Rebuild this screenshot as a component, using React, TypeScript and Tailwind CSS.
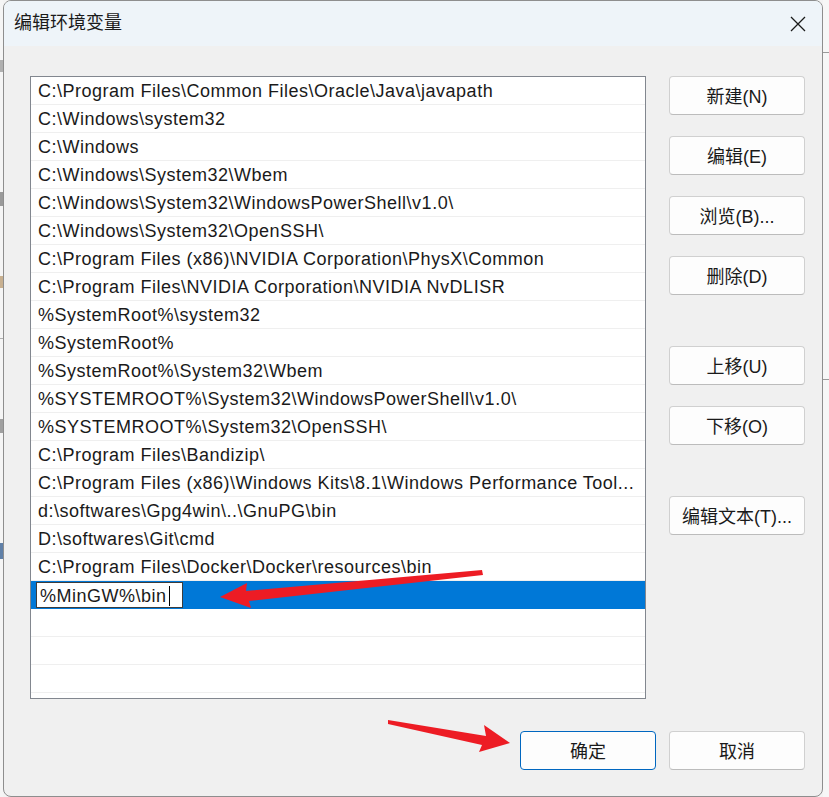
import React from "react";

const paths = [
  "C:\\Program Files\\Common Files\\Oracle\\Java\\javapath",
  "C:\\Windows\\system32",
  "C:\\Windows",
  "C:\\Windows\\System32\\Wbem",
  "C:\\Windows\\System32\\WindowsPowerShell\\v1.0\\",
  "C:\\Windows\\System32\\OpenSSH\\",
  "C:\\Program Files (x86)\\NVIDIA Corporation\\PhysX\\Common",
  "C:\\Program Files\\NVIDIA Corporation\\NVIDIA NvDLISR",
  "%SystemRoot%\\system32",
  "%SystemRoot%",
  "%SystemRoot%\\System32\\Wbem",
  "%SYSTEMROOT%\\System32\\WindowsPowerShell\\v1.0\\",
  "%SYSTEMROOT%\\System32\\OpenSSH\\",
  "C:\\Program Files\\Bandizip\\",
  "C:\\Program Files (x86)\\Windows Kits\\8.1\\Windows Performance Tool...",
  "d:\\softwares\\Gpg4win\\..\\GnuPG\\bin",
  "D:\\softwares\\Git\\cmd",
  "C:\\Program Files\\Docker\\Docker\\resources\\bin",
];

const font = { fontFamily: '"Liberation Sans", "Noto Sans CJK SC", sans-serif' };

function Btn({ label, primary, className = "" }: { label: string; primary?: boolean; className?: string }) {
  return (
    <button
      className={`flex h-[39px] w-[136px] items-center justify-center rounded-[4px] border bg-[#fdfdfd] pt-[3px] text-[18px] text-[#1a1a1a] ${
        primary ? "border-[#0067c0]" : "border-[#d0d0d0] border-b-[#bcbcbc]"
      } ${className}`}
    >
      {label}
    </button>
  );
}

export default function App() {
  return (
    <div className="relative flex h-[797px] w-[829px] overflow-hidden bg-[#f3f3f3]" style={font}>
      {/* window behind, left edge */}
      <div className="flex w-[3px] flex-col bg-[#f5f5f5]">
        <div className="mt-[60px] h-[12px] bg-[#b0b0b0]" />
        <div className="mt-[120px] h-[14px] bg-[#9a9a9a]" />
        <div className="mt-[70px] h-[12px] bg-[#c8b090]" />
        <div className="mt-[50px] h-px bg-[#b0b0b0]" />
        <div className="mt-[80px] h-[14px] bg-[#a0a0a0]" />
        <div className="mt-[110px] h-[16px] bg-[#6080a8]" />
      </div>

      <div className="flex h-[797px] w-[820px] flex-col overflow-hidden rounded-[8px] border border-[#8e8e8e] bg-[#f0f0f0]">
        <div className="flex h-[45px] items-center justify-between bg-[#eef4f9] pl-[10px] pr-[14px]">
          <span className="text-[18px] text-[#1a1a1a]">编辑环境变量</span>
          <svg width="16" height="16" viewBox="0 0 16 16" className="mr-[2px]">
            <path d="M1 1L15 15M15 1L1 15" stroke="#1a1a1a" strokeWidth="1.3" />
          </svg>
        </div>

        <div className="flex pl-[26px] pt-[30px]">
          <div className="h-[623px] w-[616px] overflow-hidden border border-[#82878f] bg-white">
            {paths.map((p) => (
              <div
                key={p}
                className="flex h-[28px] items-center border-b border-[#efefef] pl-[7px] pt-[2px] text-[18px] tracking-[0.5px] text-[#1a1a1a] whitespace-nowrap"
              >
                {p}
              </div>
            ))}
            <div className="flex h-[28px] items-center bg-[#0078d7] pl-[5px]">
              <div className="flex h-[26px] w-[147px] items-center border border-[#3c3c3c] bg-white pl-[3px] pt-[2px] text-[18px] tracking-[0.5px] text-[#1a1a1a] whitespace-nowrap">
                %MinGW%\bin
                <span className="ml-[2px] h-[20px] w-px bg-black" />
              </div>
            </div>
            {[0, 1, 2, 3].map((i) => (
              <div key={i} className="h-[28px] border-b border-[#efefef]" />
            ))}
          </div>

          <div className="ml-[23px] flex flex-col">
            <Btn label="新建(N)" />
            <Btn label="编辑(E)" className="mt-[21px]" />
            <Btn label="浏览(B)..." className="mt-[21px]" />
            <Btn label="删除(D)" className="mt-[21px]" />
            <Btn label="上移(U)" className="mt-[51px]" />
            <Btn label="下移(O)" className="mt-[21px]" />
            <Btn label="编辑文本(T)..." className="mt-[51px]" />
          </div>
        </div>

        <div className="mr-[17px] mt-[32px] flex justify-end gap-[13px]">
          <Btn label="确定" primary />
          <Btn label="取消" />
        </div>
      </div>

      <div className="flex w-[6px] flex-col bg-[#f7f7f7]">
        <div className="mt-[52px] h-px bg-[#9a9a9a]" />
        <div className="mt-[326px] h-px bg-[#9a9a9a]" />
      </div>

      <svg className="pointer-events-none absolute left-0 top-0" width="829" height="797">
        <polygon
          points="482,570 483,575 249,601 251,608 220,597 247,583 246,591"
          fill="#ed1c24"
        />
        <polygon
          points="388,720 388,724 482,745 479,752 510,743 484,725 486,736"
          fill="#ed1c24"
        />
      </svg>
    </div>
  );
}
